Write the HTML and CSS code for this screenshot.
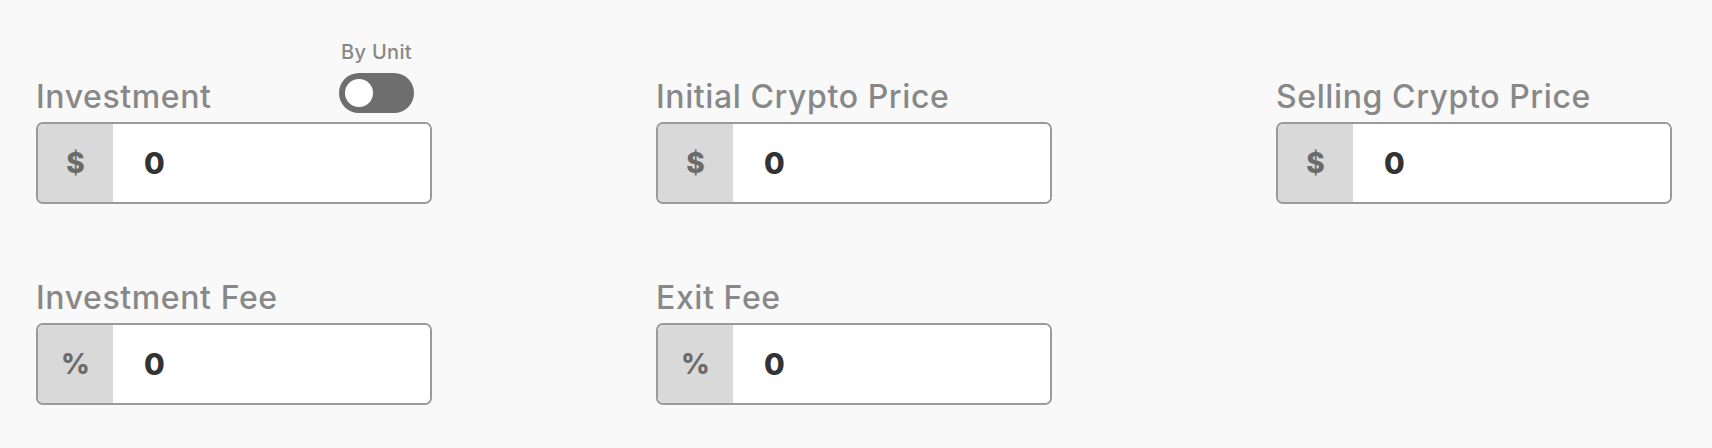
FILE: index.html
```html
<!DOCTYPE html>
<html lang="en">
<head>
    <meta charset="UTF-8">
    <meta name="viewport" content="width=device-width, initial-scale=1.0">
    <title>Crypto Profit Calculator</title>
    <link rel="stylesheet" href="styles.css">
</head>
<body>
    <div class="calc">
        <!-- Row 1 -->
        <div class="field">
            <div class="field-head">
                <label class="label">Investment</label>
                <div class="unit">
                    <span class="unit-text">By Unit</span>
                    <div class="toggle"><div class="knob"></div></div>
                </div>
            </div>
            <div class="box"><span class="prefix">$</span><input class="value" type="text" value="0"></div>
        </div>

        <div class="field">
            <label class="label">Initial Crypto Price</label>
            <div class="box"><span class="prefix">$</span><input class="value" type="text" value="0"></div>
        </div>

        <div class="field">
            <label class="label">Selling Crypto Price</label>
            <div class="box"><span class="prefix">$</span><input class="value" type="text" value="0"></div>
        </div>

        <!-- Row 2 -->
        <div class="field">
            <label class="label">Investment Fee</label>
            <div class="box"><span class="prefix">%</span><input class="value" type="text" value="0"></div>
        </div>

        <div class="field">
            <label class="label">Exit Fee</label>
            <div class="box"><span class="prefix">%</span><input class="value" type="text" value="0"></div>
        </div>
    </div>
</body>
</html>
```

FILE: styles.css
```css
* { margin: 0; padding: 0; box-sizing: border-box; font-family: Inter, "Open Sans", sans-serif; }
body { background: #F9F9F9; }

/* Grid */
.calc { display: grid; grid-template-columns: repeat(3, 396px); justify-content: space-between; row-gap: 74px; padding: 40px 40px 0 36px; }
.field { display: flex; flex-direction: column; justify-content: flex-end; }

/* Labels */
.label { font-size: 32px; line-height: 40px; font-weight: 500; color: #888; margin-bottom: 5px; letter-spacing: 0.6px; }
.field-head { display: flex; justify-content: space-between; align-items: flex-end; }

/* By Unit toggle */
.unit { display: flex; flex-direction: column; align-items: center; margin-right: 18px; margin-bottom: 9px; }
.unit-text { font-size: 20px; line-height: 24px; font-weight: 500; color: #888; margin-bottom: 9px; letter-spacing: 0.3px; }
.toggle { width: 75px; height: 40px; border-radius: 20px; background: #6E6E6E; padding: 6px; }
.knob { width: 28px; height: 28px; border-radius: 50%; background: white; }

/* Input box */
.box { display: flex; height: 82px; border: 2px solid #9A9A9A; border-radius: 7px; overflow: hidden; background: white; }
.prefix { width: 75px; background: #D9D9D9; display: flex; align-items: center; justify-content: center; font-size: 28px; font-weight: 800; color: #6B6B6B; }
.value { flex-grow: 1; border: none; outline: none; background: white; padding-left: 31px; font-size: 30px; font-weight: 800; color: #333; width: 0; }
```
